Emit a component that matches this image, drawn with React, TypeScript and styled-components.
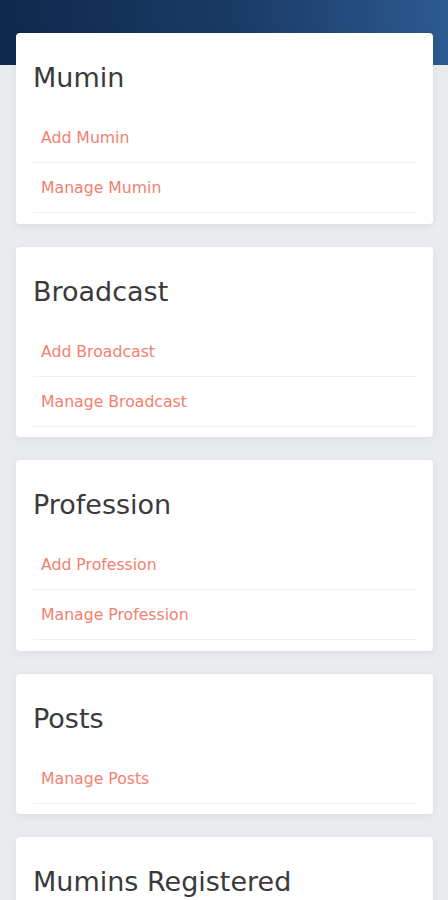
import React from 'react';
import styled, { createGlobalStyle } from 'styled-components';

const GlobalStyle = createGlobalStyle`
  html, body {
    margin: 0;
    padding: 0;
    background: #eaebef;
    font-family: "DejaVu Sans", "Open Sans", sans-serif;
  }
`;

// Dark blue band at the top, cards overlap its lower half
const TopBand = styled.div`
  height: 65px;
  background: linear-gradient(90deg, #0f284d 0%, #1b3c68 55%, #2c5b90 100%);
`;

const CardList = styled.main`
  position: relative;
  margin-top: -32px;
  padding: 0 15px 40px 16px;
  display: flex;
  flex-direction: column;
  gap: 23px;
`;

const Card = styled.section`
  background: #fff;
  border-radius: 4px;
  box-shadow: 0 2px 8px rgba(30, 40, 60, 0.07);
  padding: 29px 17px 10.6px;
`;

const CardTitle = styled.h2`
  margin: 0 0 19px;
  font-size: 27px;
  line-height: 32px;
  font-weight: normal;
  color: #3a3a3c;
`;

const LinkRow = styled.a`
  display: block;
  padding: 13px 8px;
  line-height: 23px;
  font-size: 15.7px;
  color: #f37f70;
  text-decoration: none;
  border-bottom: 1px solid #f0f0f2;
`;

const EmptyBody = styled.div`
  height: 80px;
`;

const sections = [
  { title: 'Mumin', links: ['Add Mumin', 'Manage Mumin'] },
  { title: 'Broadcast', links: ['Add Broadcast', 'Manage Broadcast'] },
  { title: 'Profession', links: ['Add Profession', 'Manage Profession'] },
  { title: 'Posts', links: ['Manage Posts'] },
  { title: 'Mumins Registered', links: [] as string[] },
];

export default function App() {
  return (
    <>
      <GlobalStyle />
      <TopBand />
      <CardList>
        {sections.map((s) => (
          <Card key={s.title}>
            <CardTitle>{s.title}</CardTitle>
            {s.links.map((l) => (
              <LinkRow key={l} href="#">
                {l}
              </LinkRow>
            ))}
            {s.links.length === 0 && <EmptyBody />}
          </Card>
        ))}
      </CardList>
    </>
  );
}
